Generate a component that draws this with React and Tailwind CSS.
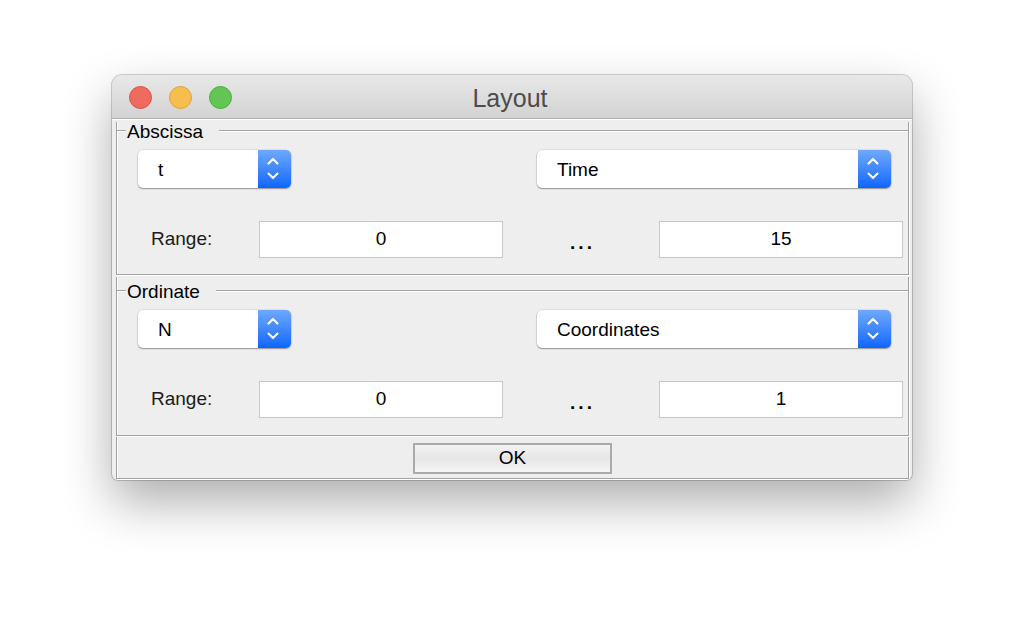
import React from "react";

const font = { fontFamily: '"Liberation Sans", Arial, sans-serif' };

function Chevrons() {
  return (
    <svg width="12" height="22" viewBox="0 0 12 22" fill="none">
      <path d="M1.5 5.5 L6 1 L10.5 5.5" stroke="white" strokeWidth="2" strokeLinecap="round" strokeLinejoin="round" />
      <path d="M1.5 15.5 L6 20 L10.5 15.5" stroke="white" strokeWidth="2" strokeLinecap="round" strokeLinejoin="round" />
    </svg>
  );
}

function Combo({ value, width }) {
  return (
    <div
      className={`flex h-[38px] ${width} rounded-[5px] bg-white shadow-[0_1px_1.5px_rgba(0,0,0,0.35),0_0_0_0.5px_rgba(0,0,0,0.12)]`}
    >
      <div className="flex flex-1 items-center pl-[20px] pt-[3px] text-[19px] text-black">{value}</div>
      <div className="flex w-[33px] items-center justify-center rounded-r-[5px] bg-gradient-to-b from-[#6ea8fb] to-[#0a65fe] pr-[3px]">
        <Chevrons />
      </div>
    </div>
  );
}

function Field({ value }) {
  return (
    <div className="flex h-[37px] w-[244px] items-center justify-center border border-[#c8c8c8] bg-white text-[19px] text-black">
      {value}
    </div>
  );
}

function Section({ title, left, right, from, to, extraTop }) {
  return (
    <div
      className={`border-x border-b border-[#a2a2a2] shadow-[inset_1px_0_0_#ffffff,1px_1px_0_#ffffff] ${extraTop}`}
    >
      <div className="flex h-[18px] items-center">
        <div className="h-0 w-[9px] border-t border-b border-t-[#a2a2a2] border-b-white" />
        <span className="pl-[1px] pr-[16px] text-[19px] leading-none text-black">{title}</span>
        <div className="h-0 flex-1 border-t border-b border-t-[#a2a2a2] border-b-white" />
      </div>
      <div className="mt-[10px] flex pl-[21px]">
        <Combo value={left} width="w-[153px]" />
        <div className="ml-[246px]">
          <Combo value={right} width="w-[354px]" />
        </div>
      </div>
      <div className="mt-[33px] flex h-[37px] items-center pl-[34px]">
        <div className="w-[108px] text-[19px] text-[#1a1a1a]">Range:</div>
        <Field value={from} />
        <div className="flex h-[37px] w-[156px] items-end justify-center pb-[6px] pl-[3px] text-[19px] font-bold leading-none tracking-[3px] text-black">
          ...
        </div>
        <Field value={to} />
      </div>
    </div>
  );
}

export default function App() {
  return (
    <div className="min-h-[628px] w-full bg-white pl-[112px] pt-[75px]" style={font}>
      <div className="flex h-[405px] w-[800px] flex-col overflow-hidden rounded-t-[10px] rounded-b-[6px] bg-[#eeeeee] shadow-[0_22px_50px_rgba(0,0,0,0.32),0_0_0_1px_rgba(0,0,0,0.18)]">
        <div className="grid h-[44px] grid-cols-[1fr_auto_1fr] items-center border-b border-[#b1b1b1] bg-gradient-to-b from-[#e9e8e9] to-[#d3d3d3]">
          <div className="mt-[2px] flex items-center gap-[17px] pl-[17px]">
            <div className="h-[23px] w-[23px] rounded-full border border-[#d9544a] bg-[#ee6b60]" />
            <div className="h-[23px] w-[23px] rounded-full border border-[#dea23c] bg-[#f6be4f]" />
            <div className="h-[23px] w-[23px] rounded-full border border-[#4fae43] bg-[#62c554]" />
          </div>
          <div className="mt-[5px] pr-[4px] text-[25px] text-[#4c4c4c]">Layout</div>
          <div />
        </div>
        <div className="border-t border-white" />
        <div className="flex flex-1 flex-col pl-[4px] pr-[3px] pt-[2px]">
          <Section title="Abscissa" left="t" right="Time" from="0" to="15" extraTop="pb-[16px]" />
          <div className="mt-[2px]">
            <Section title="Ordinate" left="N" right="Coordinates" from="0" to="1" extraTop="pt-[5px] pb-[17px]" />
          </div>
          <div className="mt-[1px] flex justify-center border-x border-b border-[#a2a2a2] pb-[4px] pt-[6px] shadow-[inset_1px_0_0_#ffffff,1px_1px_0_#ffffff]">
            <div className="flex h-[31px] w-[199px] items-center justify-center border-2 border-[#aaaaaa] bg-gradient-to-b from-[#f3f3f3] via-[#e6e6e6] to-[#f6f6f6] text-[19px] text-black">
              OK
            </div>
          </div>
        </div>
      </div>
    </div>
  );
}
